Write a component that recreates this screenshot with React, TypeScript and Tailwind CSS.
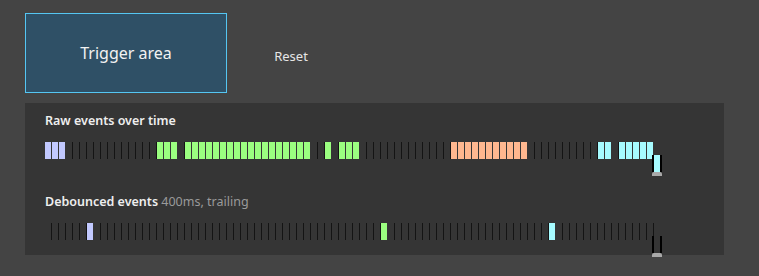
import React from "react";

type Slot = "" | "b" | "g" | "o" | "c";

const fills: Record<string, string> = {
  b: "bg-[#c2c9ff]",
  g: "bg-[#9bff80]",
  o: "bg-[#ffb78f]",
  c: "bg-[#a6fbff]",
};

// run-length spec -> flat list of slots
const expand = (runs: [Slot, number][]): Slot[] =>
  runs.flatMap(([k, n]) => Array.from({ length: n }, () => k));

const rawSlots = expand([
  ["b", 3],
  ["", 13],
  ["g", 3],
  ["", 1],
  ["g", 18],
  ["", 2],
  ["g", 1],
  ["", 1],
  ["g", 3],
  ["", 13],
  ["o", 11],
  ["", 10],
  ["c", 2],
  ["", 1],
  ["c", 5],
]);

const debouncedSlots = expand([
  ["", 6],
  ["b", 1],
  ["", 41],
  ["g", 1],
  ["", 23],
  ["c", 1],
  ["", 14],
]);

const Bar = ({ kind }: { kind: Slot }) =>
  kind ? (
    <div className="flex w-[7px] h-[17px] shrink-0">
      <div className={`w-[6px] h-full ${fills[kind]}`} />
    </div>
  ) : (
    <div className="flex w-[7px] h-[17px] shrink-0">
      <div className="w-[6px] h-full" />
      <div className="w-px h-full bg-[#141414]" />
    </div>
  );

const Timeline = ({ slots, live }: { slots: Slot[]; live?: boolean }) => (
  <div className="relative flex mt-[12px] h-[17px]">
    {slots.map((s, i) => (
      <Bar key={i} kind={s} />
    ))}
    {/* playhead */}
    <div className="absolute left-[607px] top-[13px] w-[10px] h-[21px] flex flex-col">
      <div className="flex-1 flex">
        <div className="w-[2px] bg-black" />
        <div className={`flex-1 ${live ? "bg-[#a6fbff]" : ""}`} />
        <div className="w-[2px] bg-black" />
      </div>
      <div className="h-[4px] bg-[#a9a9a9] rounded-t-[2px]" />
    </div>
  </div>
);

export default function App() {
  return (
    <div className="w-[759px] h-[276px] bg-[#444444] pt-[13px] pl-[25px] [font-family:'Noto_Sans','Open_Sans',sans-serif] overflow-hidden">
      <div className="flex items-center">
        <div className="w-[202px] h-[80px] flex items-center justify-center bg-[#2f5066] border border-[#55c6f2] text-[#f2f2f2] text-[16px]">
          Trigger area
        </div>
        <button className="w-[128px] pt-[8px] text-center text-[13px] text-[#e6e6e6]">
          Reset
        </button>
      </div>

      <div className="mt-[10px] w-[699px] h-[152px] bg-[#353535] pt-[9px] px-[20px]">
        <div className="h-[18px] leading-[18px] text-[12.5px] font-semibold text-[#eeeeee]">
          Raw events over time
        </div>
        <Timeline slots={rawSlots} live />

        <div className="mt-[34px] h-[18px] leading-[18px] text-[12.5px] text-[#eeeeee]">
          <span className="font-semibold">Debounced events</span>{" "}
          <span className="text-[#9a9a9a]">400ms, trailing</span>
        </div>
        <Timeline slots={debouncedSlots} />
      </div>
    </div>
  );
}
